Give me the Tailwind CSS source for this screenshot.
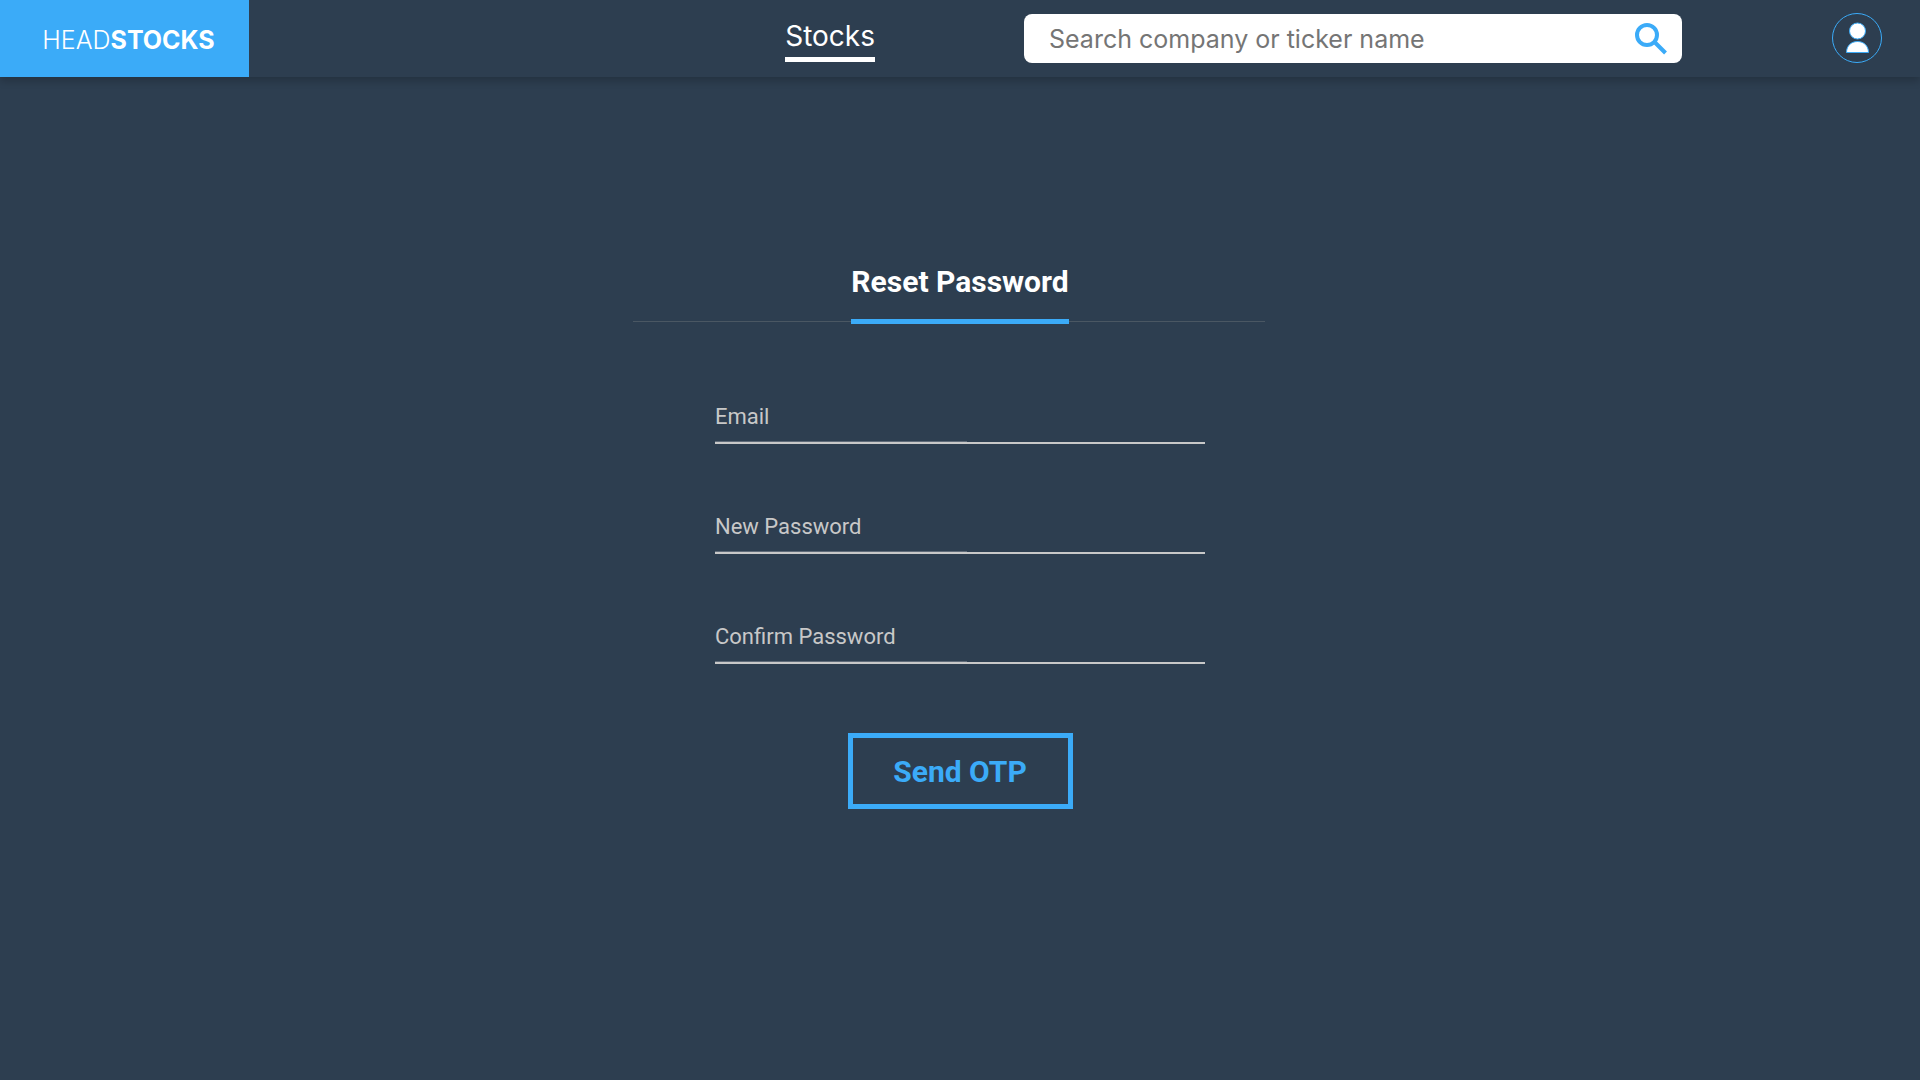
<!DOCTYPE html>
<html lang="en">
<head>
<meta charset="utf-8">
<meta name="viewport" content="width=device-width, initial-scale=1">
<title>Headstocks - Reset Password</title>
<script src="https://cdn.jsdelivr.net/npm/@tailwindcss/browser@4"></script>
</head>
<body class="flex min-h-screen flex-col bg-[#2d3e50] font-['Roboto',sans-serif] text-white">
<header class="flex h-[77px] items-center pr-[38px] font-['Inter',sans-serif] shadow-[0_4px_8px_rgba(0,0,0,0.2)]">
  <a href="#" class="flex h-full w-[249px] shrink-0 items-center justify-center bg-[#3babf8] pt-1 pl-2 text-[25px]"><span class="font-light">HEAD</span><span class="font-bold">STOCKS</span></a>
  <nav class="ml-auto">
    <a href="#" class="block border-b-[5px] border-white pt-1 pb-1 text-[28px] leading-[34px]">Stocks</a>
  </nav>
  <form role="search" class="ml-[149px] flex h-[49px] w-[658px] items-center rounded-lg bg-white pr-[14px] pl-[25px]">
    <input type="search" aria-label="Search" placeholder="Search company or ticker name" class="h-full min-w-0 flex-1 bg-transparent text-[25px] text-gray-900 outline-none placeholder:text-[#757575]">
    <button type="button" aria-label="Search" class="shrink-0">
      <svg class="block h-8 w-9" viewBox="0 0 36 32" fill="none" stroke="#3babf8" stroke-width="4"><circle cx="15" cy="12" r="10"/><path d="M22 18.500L33.500 30"/></svg>
    </button>
  </form>
  <button type="button" aria-label="Account" class="ml-[150px] shrink-0 pb-px">
    <svg class="block h-[50px] w-[50px]" viewBox="0 0 50 50" fill="none" stroke="#3babf8"><circle cx="25" cy="25" r="24.500"/><g fill="#fff"><circle cx="25.500" cy="18" r="8"/><path d="M14.500 39.500C14.500 33 19 28.500 25.500 28.500S36.500 33 36.500 39.500Z"/></g></svg>
  </button>
</header>
<main class="flex flex-col items-center pt-[185px]">
  <div class="grid w-full max-w-[655px] grid-cols-[1fr_auto_1fr] items-end">
    <span class="mb-0.5 h-px bg-[#4a5763]"></span>
    <h1 class="border-b-[5px] border-[#3babf8] pb-[17px] text-[30px] leading-10 font-bold">Reset Password</h1>
    <span class="mr-[23px] mb-0.5 h-px bg-[#4a5763]"></span>
  </div>
  <form class="flex w-full max-w-[490px] flex-col items-center pt-[72px]">
    <div class="mb-[62px] w-full border-b-2 border-[#c8c8c8]"><input type="email" aria-label="Email" placeholder="Email" class="block h-[46px] w-[252px] border-b border-[#5f6b79] bg-transparent pb-1 text-[22px] outline-none placeholder:text-[#c8c8c8]"></div>
    <div class="mb-[62px] w-full border-b-2 border-[#c8c8c8]"><input type="password" aria-label="New Password" placeholder="New Password" class="block h-[46px] w-[252px] border-b border-[#5f6b79] bg-transparent pb-1 text-[22px] outline-none placeholder:text-[#c8c8c8]"></div>
    <div class="mb-[69px] w-full border-b-2 border-[#c8c8c8]"><input type="password" aria-label="Confirm Password" placeholder="Confirm Password" class="block h-[46px] w-[252px] border-b border-[#5f6b79] bg-transparent pb-1 text-[22px] outline-none placeholder:text-[#c8c8c8]"></div>
    <button type="button" class="h-[76px] w-[225px] border-[5px] border-[#3babf8] text-[30px] font-bold text-[#3babf8]">Send OTP</button>
  </form>
</main>
</body>
</html>
